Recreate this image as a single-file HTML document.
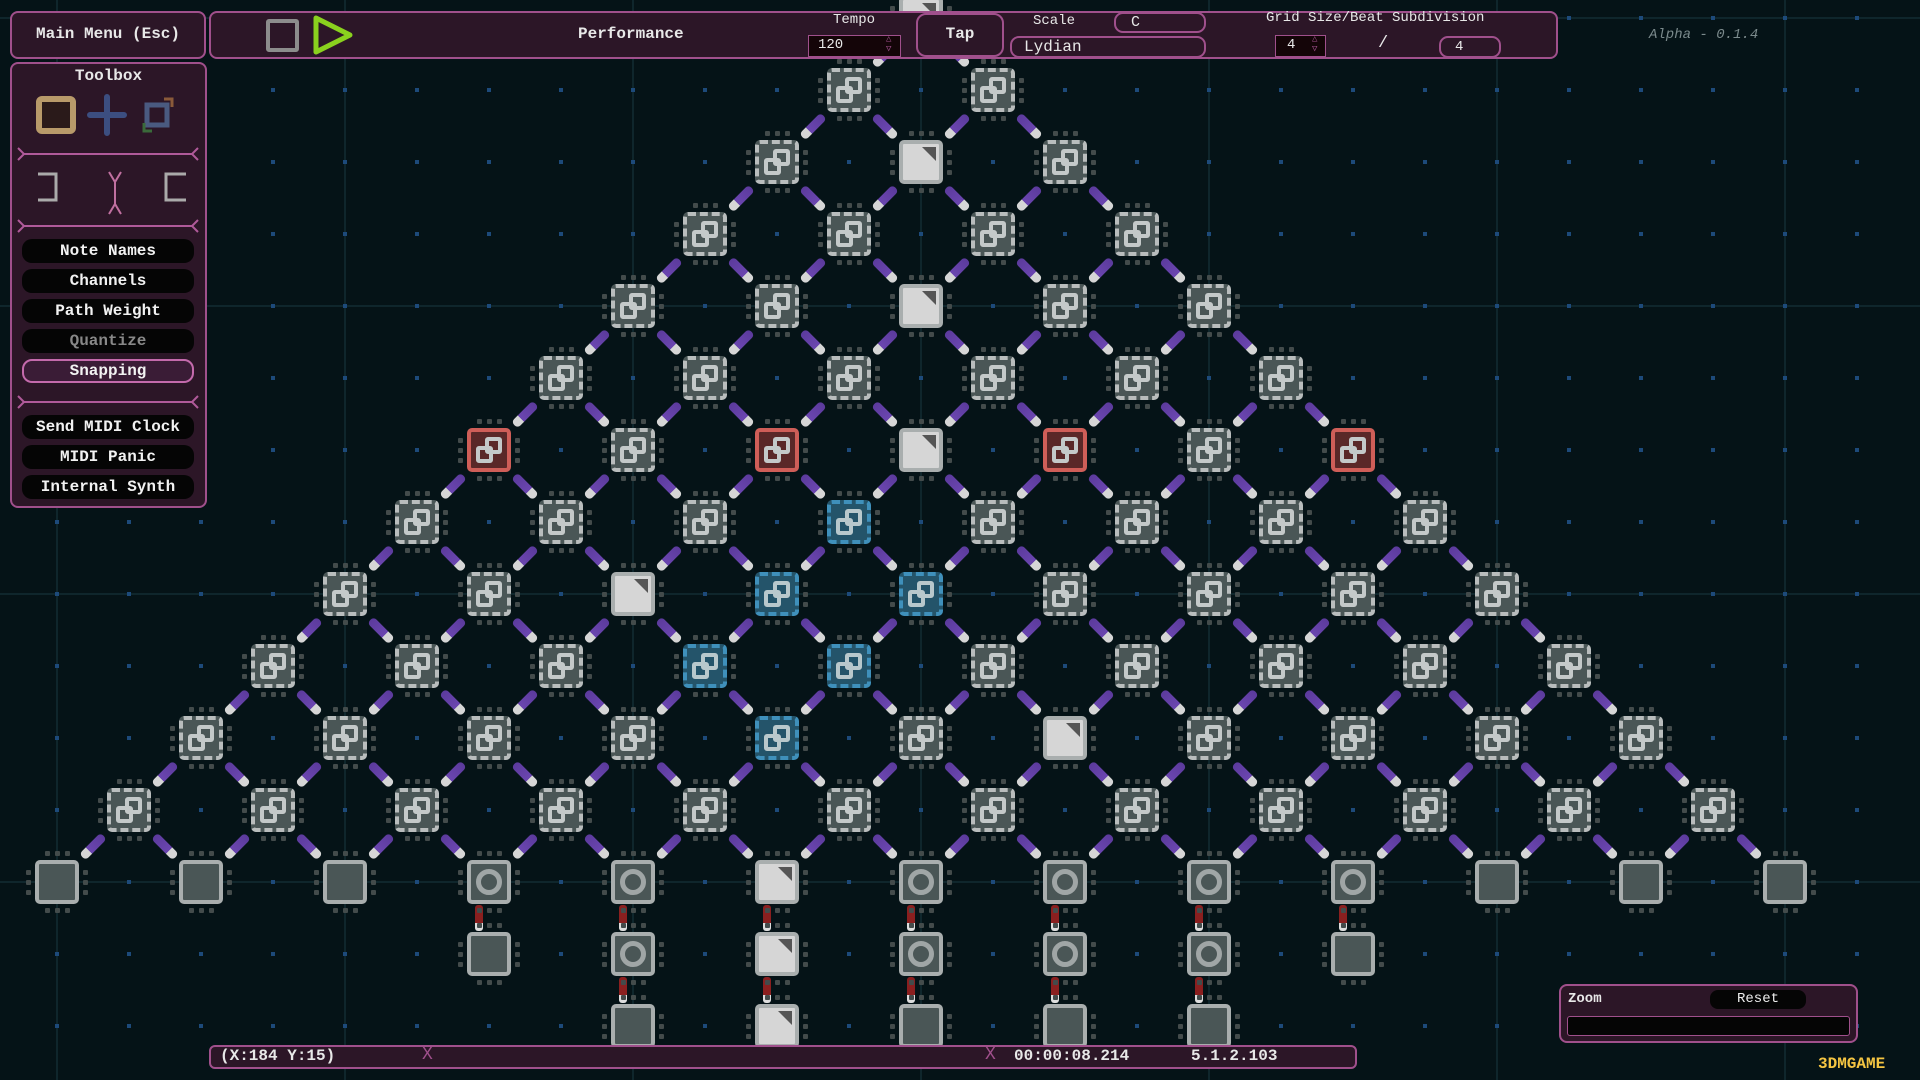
<!DOCTYPE html>
<html><head><meta charset="utf-8">
<style>
*{margin:0;padding:0;box-sizing:border-box}
body{width:1920px;height:1080px;overflow:hidden;background:#051317;font-family:"Liberation Mono",monospace;color:#eee;position:relative}
#grid{position:absolute;left:0;top:0}
.panel{position:absolute;background:#2c1627;border:2px solid #a0508c;border-radius:8px}
.btn{position:absolute;left:22px;width:172px;height:24px;background:#050505;border-radius:10px;text-align:center;font-size:16px;line-height:24px;font-weight:bold;color:#f2f2f2}
.node{position:absolute;width:44px;height:44px;border:4px dashed #b9bdbd;border-radius:5px;background:#4a5656}
.node .ic{position:absolute;left:14px;top:5px;width:17px;height:17px;border:4px solid #c4c9c9;border-radius:3px}
.node .ic2{position:absolute;left:5px;top:14px;width:17px;height:17px;border:4px solid #c4c9c9;border-radius:3px}
.red{border:4px solid #cf5e58;background:#5a2828}
.blue{border-color:#3f90bb;background:#24546a}
.blue .ic,.blue .ic2{border-color:#b8c8cc}
.white{border:4px solid #a9aeae;background:#d6d6d6}
.white .tri{position:absolute;right:3px;top:3px;width:0;height:0;border-top:14px solid #555;border-left:14px solid transparent}
.circ{border:4px solid #a9aeae}
.circ .ring{position:absolute;left:5px;top:5px;width:26px;height:26px;border:5px solid #a0a6a6;border-radius:50%}
.plain{border:4px solid #a9aeae}
.pin{position:absolute;width:5px;height:5px;background:#434b4b;border-radius:1px}
.pill{position:absolute;width:30px;height:9px;border-radius:4px;background:linear-gradient(90deg,#5b3a9c 0,#6b46b0 70%,#d6d6d6 70%);}
.vpill{position:absolute;width:8px;height:26px;border-radius:3px;background:linear-gradient(#8a1f1f 0,#8a1f1f 70%,#ddd 70%)}
.lbl{position:absolute;font-size:15px;color:#e8e8e8}
</style></head><body>
<svg id="grid" width="1920" height="1080"></svg>
<div id="nodes"></div>

<div class="panel" style="left:10px;top:11px;width:196px;height:48px"></div>
<div class="lbl" style="left:10px;top:25px;width:196px;text-align:center;font-size:16px;font-weight:bold">Main Menu (Esc)</div>
<div class="panel" style="left:209px;top:11px;width:1349px;height:48px"></div>
<div style="position:absolute;left:266px;top:19px;width:33px;height:33px;border:4px solid #8c8c8c;border-radius:3px"></div>
<svg style="position:absolute;left:312px;top:14px" width="44" height="42"><polygon points="4,4 38,21 4,38" fill="none" stroke="#8ad11e" stroke-width="5" stroke-linejoin="round"/></svg>
<div class="lbl" style="left:578px;top:25px;font-size:16px;font-weight:bold">Performance</div>
<div class="lbl" style="left:833px;top:12px;font-size:14px">Tempo</div>
<div style="position:absolute;left:808px;top:35px;width:93px;height:22px;background:#140508;border:1px solid #a0508c"></div>
<div class="lbl" style="left:818px;top:37px;font-size:14px">120</div>
<div class="lbl" style="left:886px;top:34px;font-size:9px;color:#a0508c;line-height:10px">△<br>▽</div>
<div style="position:absolute;left:916px;top:13px;width:88px;height:44px;border:2px solid #a0508c;border-radius:10px;background:#2c1627"></div>
<div class="lbl" style="left:916px;top:25px;width:88px;text-align:center;font-size:16px;font-weight:bold">Tap</div>
<div class="lbl" style="left:1033px;top:13px;font-size:14px">Scale</div>
<div style="position:absolute;left:1114px;top:12px;width:92px;height:21px;border:2px solid #a0508c;border-radius:9px"></div>
<div class="lbl" style="left:1131px;top:14px;font-size:15px">C</div>
<div style="position:absolute;left:1010px;top:36px;width:196px;height:22px;border:2px solid #a0508c;border-radius:9px"></div>
<div class="lbl" style="left:1024px;top:38px;font-size:16px">Lydian</div>
<div class="lbl" style="left:1266px;top:10px;font-size:14px">Grid Size/Beat Subdivision</div>
<div style="position:absolute;left:1275px;top:35px;width:51px;height:22px;background:#140508;border:1px solid #a0508c"></div>
<div class="lbl" style="left:1287px;top:37px;font-size:14px">4</div>
<div class="lbl" style="left:1312px;top:34px;font-size:9px;color:#a0508c;line-height:10px">△<br>▽</div>
<div class="lbl" style="left:1378px;top:34px;font-size:17px">/</div>
<div style="position:absolute;left:1439px;top:36px;width:62px;height:22px;border:2px solid #a0508c;border-radius:9px"></div>
<div class="lbl" style="left:1455px;top:39px;font-size:14px">4</div>
<div class="lbl" style="left:1649px;top:27px;font-size:14px;font-style:italic;color:#7b8a8c">Alpha - 0.1.4</div>

<div class="panel" style="left:10px;top:62px;width:197px;height:446px"></div>
<div class="lbl" style="left:10px;top:67px;width:197px;text-align:center;font-size:16px;font-weight:bold">Toolbox</div>
<div style="position:absolute;left:36px;top:96px;width:40px;height:38px;border:6px solid #b89a6a;border-radius:6px;background:#2a1a1a"></div>
<svg style="position:absolute;left:86px;top:93px" width="42" height="44"><path d="M21 4V40M4 22H38" stroke="#3c4e80" stroke-width="6" stroke-linecap="round"/></svg>
<svg style="position:absolute;left:138px;top:93px" width="42" height="44"><rect x="9" y="12" width="20" height="20" fill="none" stroke="#4a5a80" stroke-width="5"/><path d="M26 6 34 6 34 14" stroke="#8a5a3a" stroke-width="3" fill="none"/><path d="M6 30 6 38 14 38" stroke="#3a6a3a" stroke-width="3" fill="none"/></svg>
<svg style="position:absolute;left:14px;top:142px" width="190" height="100"><path d="M4 6 10 12 4 18M184 6 178 12 184 18M10 12H178" stroke="#b05a9a" stroke-width="2" fill="none"/><path d="M24 32H42V58H24" stroke="#aaa" stroke-width="3" fill="none"/><path d="M95 30 101 40 107 30M101 40V62M95 72 101 62 107 72" stroke="#c070a0" stroke-width="2" fill="none"/><path d="M172 32H152V58H172" stroke="#aaa" stroke-width="3" fill="none"/><path d="M4 78 10 84 4 90M184 78 178 84 184 90M10 84H178" stroke="#b05a9a" stroke-width="2" fill="none"/></svg>
<div class="btn" style="top:239px">Note Names</div>
<div class="btn" style="top:269px">Channels</div>
<div class="btn" style="top:299px">Path Weight</div>
<div class="btn" style="top:329px;color:#888">Quantize</div>
<div class="btn" style="top:359px;background:#3a1c36;border:2px solid #c46aac;line-height:20px">Snapping</div>
<svg style="position:absolute;left:14px;top:390px" width="190" height="24"><path d="M4 6 10 12 4 18M184 6 178 12 184 18M10 12H178" stroke="#b05a9a" stroke-width="2" fill="none"/></svg>
<div class="btn" style="top:415px">Send MIDI Clock</div>
<div class="btn" style="top:445px">MIDI Panic</div>
<div class="btn" style="top:475px">Internal Synth</div>

<div style="position:absolute;left:209px;top:1045px;width:1148px;height:24px;background:#2c1627;border:2px solid #a0508c;border-radius:6px"></div>
<div class="lbl" style="left:220px;top:1047px;font-size:16px;font-weight:bold">(X:184 Y:15)</div>
<div class="lbl" style="left:1014px;top:1047px;font-size:16px;font-weight:bold">00:00:08.214</div>
<div class="lbl" style="left:1191px;top:1047px;font-size:16px;font-weight:bold">5.1.2.103</div>
<div class="lbl" style="left:422px;top:1045px;font-size:18px;color:#a0508c">X</div>
<div class="lbl" style="left:985px;top:1045px;font-size:18px;color:#a0508c">X</div>
<div class="panel" style="left:1559px;top:984px;width:299px;height:59px"></div>
<div class="lbl" style="left:1568px;top:991px;font-size:14px;font-weight:bold">Zoom</div>
<div style="position:absolute;left:1710px;top:990px;width:96px;height:19px;background:#050505;border-radius:8px;text-align:center;font-size:14px;line-height:19px">Reset</div>
<div style="position:absolute;left:1567px;top:1016px;width:283px;height:20px;background:#050505;border:1px solid #a0508c;border-radius:3px"></div>
<div class="lbl" style="left:1818px;top:1055px;font-size:16px;font-weight:bold;color:#f5c542">3DMGAME</div>

<script>
var g=document.getElementById('grid'),s='';
for(var x=57;x<1920;x+=72){if((x-57)%288===0)s+='<line x1="'+x+'" y1="0" x2="'+x+'" y2="1080" stroke="#0f262c" stroke-width="2"/>';}
for(var y=18;y<1080;y+=72){if((882-y)%288===0)s+='<line x1="0" y1="'+y+'" x2="1920" y2="'+y+'" stroke="#0f262c" stroke-width="2"/>';}
for(var x=57;x<1920;x+=72)for(var y=18;y<1080;y+=72)s+='<rect x="'+(x-2)+'" y="'+(y-2)+'" width="4" height="4" fill="#1d4a7a"/>';
g.innerHTML=s;
var N=document.getElementById('nodes'),h='';
function X(j){return 921+72*j}function Y(r){return 882-72*r}
var red={'6,-6':1,'6,-2':1,'6,2':1,'6,6':1};
var blue={'5,-1':1,'4,-2':1,'4,0':1,'3,-3':1,'3,-1':1,'2,-2':1};
var wht={'12,0':1,'10,0':1,'8,0':1,'6,0':1,'4,-4':1,'2,2':1,'0,-2':1,'-1,-2':1,'-2,-2':1};
var circ={'0,-6':1,'0,-4':1,'0,0':1,'0,2':1,'0,4':1,'0,6':1,'-1,-4':1,'-1,0':1,'-1,2':1,'-1,4':1};
for(var r=1;r<=12;r++)for(var j=-(12-r);j<=12-r;j+=2){
 var x=X(j),y=Y(r);
 h+='<div class="pill" style="left:'+(x-36-15)+'px;top:'+(y+36-4)+'px;transform:rotate(135deg)"></div>';
 h+='<div class="pill" style="left:'+(x+36-15)+'px;top:'+(y+36-4)+'px;transform:rotate(45deg)"></div>';
}
for(var j=-6;j<=6;j+=2){h+='<div class="vpill" style="left:'+(X(j)-14)+'px;top:'+(Y(0)+23)+'px"></div>';}
for(var j=-4;j<=4;j+=2){h+='<div class="vpill" style="left:'+(X(j)-14)+'px;top:'+(Y(-1)+23)+'px"></div>';}
function node(r,j){
 var k=r+','+j,x=X(j),y=Y(r),c='node',inner='<div class="ic"></div><div class="ic2"></div>';
 if(red[k])c+=' red';else if(blue[k])c+=' blue';
 if(wht[k]){c+=' white';inner='<div class="tri"></div>';}
 else if(circ[k]){c+=' circ';inner='<div class="ring"></div>';}
 else if(r<=0){c+=' plain';inner='';}
 var p='';
 for(var i=-1;i<=1;i++){
  p+='<div class="pin" style="left:'+(x+i*10-2)+'px;top:'+(y-31)+'px"></div>';
  p+='<div class="pin" style="left:'+(x+i*10-2)+'px;top:'+(y+26)+'px"></div>';
  p+='<div class="pin" style="left:'+(x-31)+'px;top:'+(y+i*10-2)+'px"></div>';
  p+='<div class="pin" style="left:'+(x+26)+'px;top:'+(y+i*10-2)+'px"></div>';
 }
 h+=p+'<div class="'+c+'" style="left:'+(x-22)+'px;top:'+(y-22)+'px">'+inner+'</div>';
}
for(var r=12;r>=0;r--)for(var j=-(12-r);j<=12-r;j+=2)node(r,j);
for(var j=-6;j<=6;j+=2)node(-1,j);
for(var j=-4;j<=4;j+=2)node(-2,j);
N.innerHTML=h;
</script>
</body></html>
